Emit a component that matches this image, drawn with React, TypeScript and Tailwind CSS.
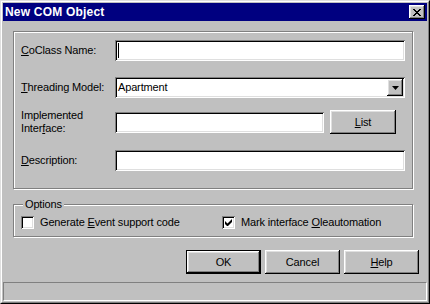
import React from "react";

const raised =
  "shadow-[inset_-1px_-1px_0_#000,inset_1px_1px_0_#fff,inset_-2px_-2px_0_#808080,inset_2px_2px_0_#dfdfdf]";
const sunken =
  "shadow-[inset_1px_1px_0_#808080,inset_-1px_-1px_0_#fff,inset_2px_2px_0_#000,inset_-2px_-2px_0_#dfdfdf]";
const etched = "border border-[#808080] shadow-[inset_1px_1px_0_#fff,1px_1px_0_#fff]";

function U({ children }: { children: React.ReactNode }) {
  return <span className="underline underline-offset-[1px]">{children}</span>;
}

function Field({ w, cursor }: { w?: string; cursor?: boolean }) {
  return (
    <div className={`relative h-[21px] bg-white ${sunken} ${w ?? "flex-1"}`}>
      {cursor && <div className="absolute left-[3px] top-[3px] h-[15px] w-[1px] bg-black" />}
    </div>
  );
}

function Button({
  children,
  def,
  w = "w-[75px]",
  h = "h-[24px]",
}: {
  children: React.ReactNode;
  def?: boolean;
  w?: string;
  h?: string;
}) {
  if (def) {
    return (
      <div className={`${w} ${h} border border-black`}>
        <div className={`flex h-full w-full items-center justify-center ${raised}`}>{children}</div>
      </div>
    );
  }
  return <div className={`flex ${w} ${h} items-center justify-center ${raised}`}>{children}</div>;
}

function Check({ checked }: { checked?: boolean }) {
  return (
    <div className={`relative h-[13px] w-[13px] shrink-0 bg-white ${sunken}`}>
      {checked && (
        <svg className="absolute left-[3px] top-[3px]" width="7" height="7" viewBox="0 0 7 7">
          <path d="M0 2v3l2 2h1l4-4V0L2.5 4.5z" fill="#000" />
        </svg>
      )}
    </div>
  );
}

export default function App() {
  return (
    <div
      className="h-[304px] w-[430px] border-b border-l border-r border-t border-b-black border-l-[#dfdfdf] border-r-black border-t-[#dfdfdf] bg-[#c0c0c0] text-[11px] leading-[13px] tracking-[-0.15px] text-black"
      style={{ fontFamily: '"Liberation Sans", Arial, sans-serif' }}
    >
      <div className="flex h-full flex-col border-b border-l border-r border-t border-b-[#808080] border-l-white border-r-[#808080] border-t-white p-[1px]">
        {/* Title bar */}
        <div className="flex h-[18px] items-center justify-between bg-[#000080] pl-[2px] pr-[2px]">
          <span className="text-[12px] font-bold tracking-[0.2px] text-white">New COM Object</span>
          <div className={`flex h-[14px] w-[16px] items-center justify-center bg-[#c0c0c0] ${raised}`}>
            <svg width="8" height="7" viewBox="0 0 8 7">
              <path
                d="M0 0h2v1h1v1h2V1h1V0h2v1H7v1H6v1H5v1h1v1h1v1h1v1H6V6H5V5H3v1H2v1H0V6h1V5h1V4h1V3H2V2H1V1H0z"
                fill="#000"
              />
            </svg>
          </div>
        </div>

        {/* Main group */}
        <div className={`ml-[10px] mt-[10px] w-[400px] ${etched} px-[7px] pb-[17px] pt-[8px]`}>
          <div className="flex h-[21px] items-center">
            <div className="w-[94px]">
              <U>C</U>oClass Name:
            </div>
            <Field cursor />
          </div>
          <div className="mt-[16px] flex h-[21px] items-center">
            <div className="w-[94px]">
              <U>T</U>hreading Model:
            </div>
            <div className={`flex h-[21px] flex-1 items-center bg-white pl-[3px] pr-[2px] ${sunken}`}>
              <span className="flex-1">Apartment</span>
              <div className={`flex h-[17px] w-[16px] items-center justify-center bg-[#c0c0c0] ${raised}`}>
                <svg width="7" height="4" viewBox="0 0 7 4">
                  <path d="M0 0h7L3.5 4z" fill="#000" />
                </svg>
              </div>
            </div>
          </div>
          <div className="mt-[12px] flex h-[24px] items-center">
            <div className="w-[94px]">
              Implemented
              <br />
              Inter<U>f</U>ace:
            </div>
            <Field w="w-[209px]" />
            <div className="ml-[6px]">
              <Button w="w-[66px]">
                <U>L</U>ist
              </Button>
            </div>
          </div>
          <div className="mt-[16px] flex h-[21px] items-center">
            <div className="w-[94px]">
              <U>D</U>escription:
            </div>
            <Field />
          </div>
        </div>

        {/* Options group */}
        <div className={`relative ml-[10px] mt-[15px] w-[400px] ${etched} px-[7px] pb-[7px] pt-[11px]`}>
          <div className="absolute left-[9px] top-[-7px] bg-[#c0c0c0] px-[2px]">Options</div>
          <div className="flex h-[13px] items-center">
            <div className="flex w-[201px] items-center gap-[6px]">
              <Check />
              <span>
                Generate <U>E</U>vent support code
              </span>
            </div>
            <div className="flex items-center gap-[6px]">
              <Check checked />
              <span>
                Mark interface <U>O</U>leautomation
              </span>
            </div>
          </div>
        </div>

        {/* Buttons */}
        <div className="mt-[13px] flex justify-end gap-[4px] pr-[8px]">
          <Button def>OK</Button>
          <Button>Cancel</Button>
          <Button>
            <U>H</U>elp
          </Button>
        </div>

        {/* Status bar */}
        <div className="mt-auto h-[19px] border-b border-l border-r border-t border-b-white border-l-[#808080] border-r-white border-t-[#808080]" />
      </div>
    </div>
  );
}
